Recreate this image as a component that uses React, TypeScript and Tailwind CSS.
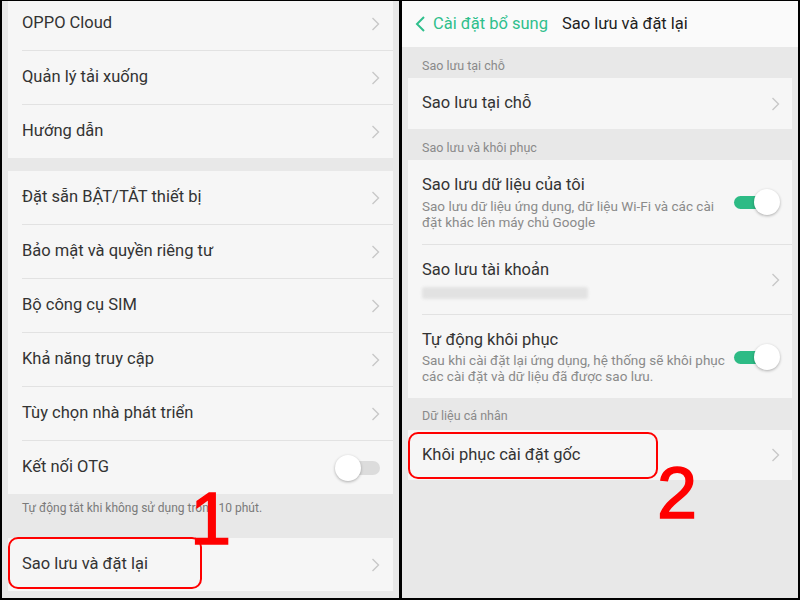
import React from "react";

const FONT = { fontFamily: "Roboto, 'Noto Sans', 'Liberation Sans', sans-serif" };

function Chevron() {
  return (
    <svg width="9" height="14" viewBox="0 0 9 14" className="shrink-0">
      <polyline points="1.5,1 7.5,7 1.5,13" fill="none" stroke="#c8c8c8" strokeWidth="1.4" />
    </svg>
  );
}

function Divider() {
  return <div className="ml-[14px] h-px bg-[#e2e2e2]" />;
}

function Row({ label, children }: { label: string; children?: React.ReactNode }) {
  return (
    <div className="flex h-[53px] items-center justify-between pl-[14px] pr-[13px]">
      <span className="text-[16.5px] text-[#333]">{label}</span>
      {children ?? <Chevron />}
    </div>
  );
}

function Toggle({ on }: { on: boolean }) {
  if (on) {
    return (
      <div className="relative h-[26px] w-[46px] shrink-0">
        <div className="absolute left-0 top-[7px] h-[13px] w-[40px] rounded-full bg-[#2dbb85]" />
        <div className="absolute right-0 top-0 h-[26px] w-[26px] rounded-full bg-white shadow-[0_1px_3px_rgba(0,0,0,0.3)]" />
      </div>
    );
  }
  return (
    <div className="relative h-[26px] w-[45px] shrink-0">
      <div className="absolute right-0 top-[6px] h-[14px] w-[35px] rounded-full bg-[#dcdcdc]" />
      <div className="absolute left-0 top-0 h-[26px] w-[26px] rounded-full bg-white shadow-[0_1px_3px_rgba(0,0,0,0.3)]" />
    </div>
  );
}

function LeftPanel() {
  const group2 = [
    "Đặt sẵn BẬT/TẮT thiết bị",
    "Bảo mật và quyền riêng tư",
    "Bộ công cụ SIM",
    "Khả năng truy cập",
    "Tùy chọn nhà phát triển",
  ];
  return (
    <div className="relative w-[397px] overflow-hidden bg-[#e8e8e8] px-[6px]">
      <div className="-mt-[4px] bg-[#f6f6f6]">
        <Row label="OPPO Cloud" />
        <Divider />
        <Row label="Quản lý tải xuống" />
        <Divider />
        <Row label="Hướng dẫn" />
      </div>
      <div className="h-[13px]" />
      <div className="bg-[#f6f6f6]">
        {group2.map((l) => (
          <React.Fragment key={l}>
            <Row label={l} />
            <Divider />
          </React.Fragment>
        ))}
        <Row label="Kết nối OTG">
          <Toggle on={false} />
        </Row>
      </div>
      <div className="h-[44px] pl-[14px] pt-[6px] text-[12px] leading-[16px] text-[#7a7a7a]">
        Tự động tắt khi không sử dụng trong 10 phút.
      </div>
      <div className="relative bg-[#f6f6f6]">
        <Row label="Sao lưu và đặt lại" />
        <div className="absolute -top-px left-0 h-[52px] w-[194px] rounded-[10px] border-2 border-[#ff0000]" />
      </div>
      <div
        className="absolute left-[188px] top-[481px] text-[74px] leading-none text-[#ff0000]"
        style={{ fontFamily: "'Liberation Sans', Arial, sans-serif", WebkitTextStroke: "1.5px #ff0000" }}
      >
        1
      </div>
    </div>
  );
}

function SectionLabel({ text, h, pt }: { text: string; h: string; pt: string }) {
  return (
    <div className={`${h} ${pt} pl-[14px] text-[12.5px] leading-[16px] text-[#8a8a8a]`}>{text}</div>
  );
}

function RightPanel() {
  return (
    <div className="relative flex-1 overflow-hidden bg-[#e8e8e8]">
      <div className="flex h-[46px] items-center bg-[#fafafa] pl-[12px]">
        <svg width="12" height="18" viewBox="0 0 12 18" className="mr-[7px]">
          <polyline points="10,2 3,9 10,16" fill="none" stroke="#2fbf8c" strokeWidth="2" />
        </svg>
        <span className="text-[16.5px] text-[#2fbf8c]">Cài đặt bổ sung</span>
        <span className="ml-[14px] text-[16.5px] text-[#1e1e1e]">Sao lưu và đặt lại</span>
      </div>
      <div className="px-[6px]">
        <SectionLabel text="Sao lưu tại chỗ" h="h-[31px]" pt="pt-[11px]" />
        <div className="flex h-[51px] items-center justify-between bg-[#f6f6f6] pl-[14px] pr-[12px]">
          <span className="text-[16.5px] text-[#333]">Sao lưu tại chỗ</span>
          <Chevron />
        </div>
        <SectionLabel text="Sao lưu và khôi phục" h="h-[31px]" pt="pt-[11px]" />
        <div className="bg-[#f6f6f6]">
          <div className="flex h-[84px] items-center justify-between pl-[14px] pr-[12px]">
            <div className="self-start pt-[14px]">
              <div className="text-[16.5px] leading-[22px] text-[#333]">Sao lưu dữ liệu của tôi</div>
              <div className="mt-[2px] w-[305px] text-[13.5px] leading-[16px] text-[#8a8a8a]">
                Sao lưu dữ liệu ứng dụng, dữ liệu Wi-Fi và các cài đặt khác lên máy chủ Google
              </div>
            </div>
            <Toggle on />
          </div>
          <Divider />
          <div className="flex h-[69px] items-center justify-between pl-[14px] pr-[12px]">
            <div className="self-start pt-[14px]">
              <div className="text-[16.5px] leading-[22px] text-[#333]">Sao lưu tài khoản</div>
              <div className="mt-[6px] h-[12px] w-[166px] rounded-[3px] bg-[#e2e2e2] blur-[1.5px]" />
            </div>
            <Chevron />
          </div>
          <Divider />
          <div className="flex h-[83px] items-center justify-between pl-[14px] pr-[12px]">
            <div className="self-start pt-[14px]">
              <div className="text-[16.5px] leading-[22px] text-[#333]">Tự động khôi phục</div>
              <div className="mt-px w-[305px] text-[13.5px] leading-[16px] text-[#8a8a8a]">
                Sau khi cài đặt lại ứng dụng, hệ thống sẽ khôi phục các cài đặt và dữ liệu đã được sao lưu.
              </div>
            </div>
            <Toggle on />
          </div>
        </div>
        <SectionLabel text="Dữ liệu cá nhân" h="h-[32px]" pt="pt-[10px]" />
        <div className="relative flex h-[50px] items-center justify-between bg-[#f6f6f6] pl-[14px] pr-[12px]">
          <span className="text-[16.5px] text-[#333]">Khôi phục cài đặt gốc</span>
          <Chevron />
          <div className="absolute left-0 top-[2px] h-[47px] w-[250px] rounded-[10px] border-2 border-[#ff0000]" />
        </div>
      </div>
      <div
        className="absolute left-[255px] top-[456px] text-[72px] leading-none text-[#ff0000]"
        style={{ fontFamily: "'Liberation Sans', Arial, sans-serif", WebkitTextStroke: "1.5px #ff0000" }}
      >
        2
      </div>
    </div>
  );
}

export default function App() {
  return (
    <div className="flex h-[600px] w-[800px] gap-[3px] bg-black px-[2px] pb-[2px] pt-px" style={FONT}>
      <LeftPanel />
      <RightPanel />
    </div>
  );
}
